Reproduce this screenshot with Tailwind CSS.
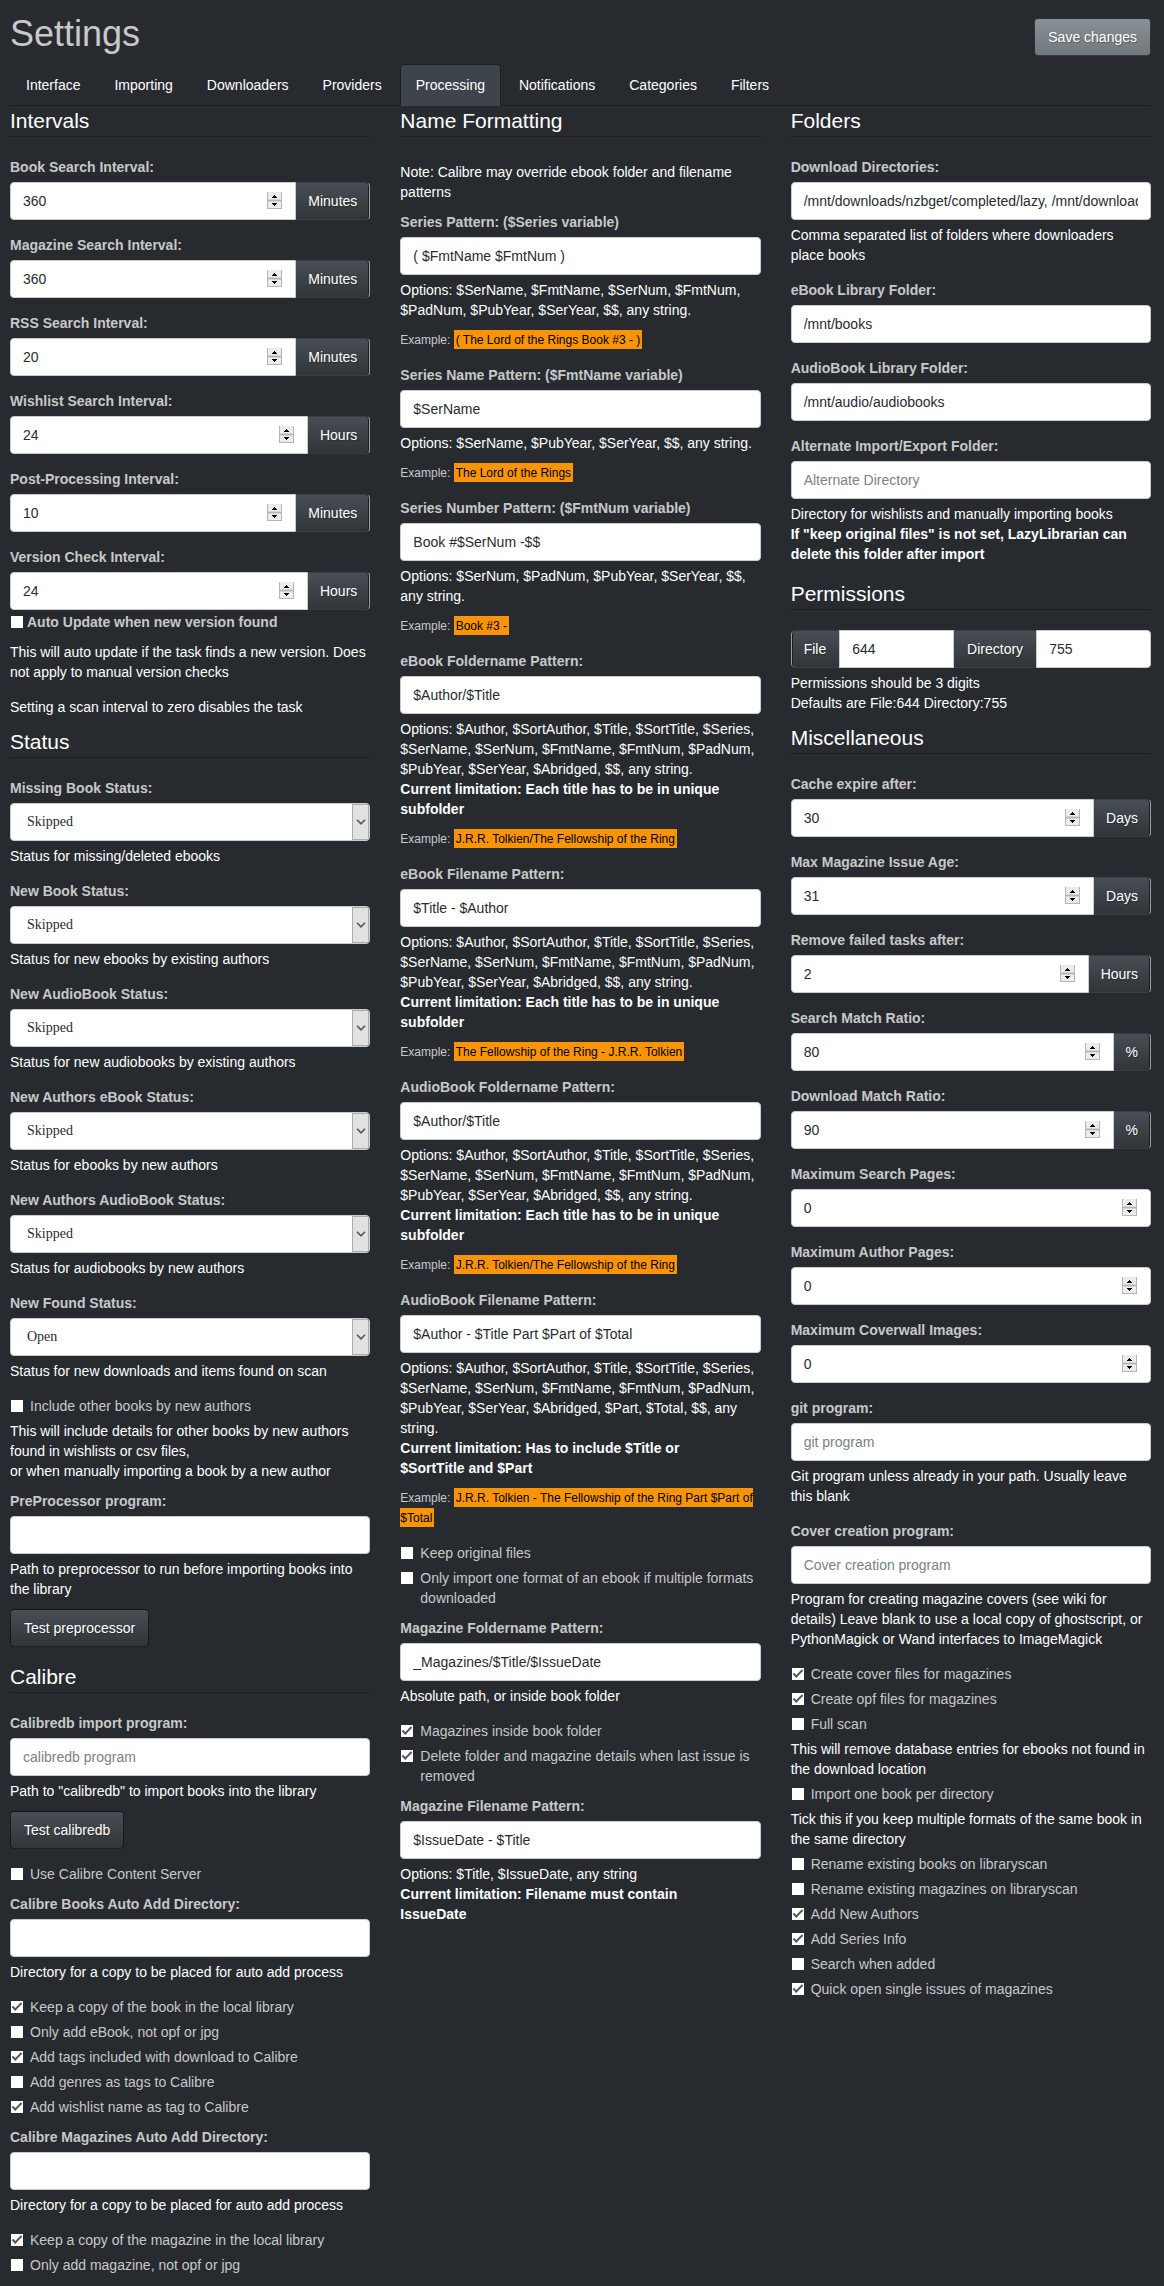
<!DOCTYPE html>
<html lang="en">
<head>
<meta charset="utf-8">
<meta name="viewport" content="width=device-width, initial-scale=1">
<title>Settings</title>
<script src="https://cdn.jsdelivr.net/npm/@tailwindcss/browser@4"></script>
</head>
<body class="bg-[#272b30] font-['Liberation_Sans',Arial,sans-serif] text-sm text-[#c8c8c8]">
<form class="pr-[13px] pl-[10px] pb-[11px]">
  <header class="flex items-start justify-between pt-[14px] pb-2">
    <h1 class="text-4xl leading-10">Settings</h1>
    <button type="button" class="mt-1 h-[38px] rounded border border-black/60 bg-linear-to-b from-[#8a9196] to-[#70787d] px-[13px] text-white text-shadow-[1px_1px_1px_rgb(0_0_0/0.3)]">Save changes</button>
  </header>

  <nav class="flex gap-[2px] border-b border-[#1c1e22] text-white [&>a]:-mb-px [&>a]:rounded-t [&>a]:border [&>a]:border-transparent [&>a]:px-[15px] [&>a]:py-[10px]">
    <a href="#interface">Interface</a>
    <a href="#importing">Importing</a>
    <a href="#downloaders">Downloaders</a>
    <a href="#providers">Providers</a>
    <a href="#processing" aria-current="page" class="aria-[current=page]:border-[#1c1e22]! aria-[current=page]:border-b-[#3e444c]! bg-[#3e444c]">Processing</a>
    <a href="#notifications">Notifications</a>
    <a href="#categories">Categories</a>
    <a href="#filters">Filters</a>
  </nav>

  <main class="grid grid-cols-3 gap-[30px]
    [&_h2]:mb-5 [&_h2]:border-b [&_h2]:border-[#1c1e22] [&_h2]:text-[21px] [&_h2]:leading-[30px] [&_h2]:text-white
    [&_.field]:mb-[15px] [&_.field>label]:mb-[5px] [&_.field>label]:block [&_.field>label]:font-bold
    [&_.help]:mt-[5px] [&_.help]:text-white
    [&_.example]:mt-[10px] [&_.example]:text-xs [&_.example]:leading-5
    [&_mark]:bg-[#f89406] [&_mark]:px-[2px] [&_mark]:pt-[3px] [&_mark]:pb-[2px] [&_mark]:text-black
    [&_.text]:h-[38px] [&_.text]:w-full [&_.text]:min-w-0 [&_.text]:rounded [&_.text]:border [&_.text]:border-[#ccc] [&_.text]:bg-white [&_.text]:px-3 [&_.text]:text-[#272b30] [&_.text]:placeholder:text-[#7a8288]
    [&_.text]:[appearance:textfield] [&_.text::-webkit-inner-spin-button]:appearance-none
    [&_.number]:relative [&_.number]:min-w-0 [&_.number]:flex-1
    [&_.spin]:pointer-events-none [&_.spin]:absolute [&_.spin]:top-[10px] [&_.spin]:right-[14px] [&_.spin]:h-[17px] [&_.spin]:w-[15px]
    [&_.group]:flex [&_.group_.text]:rounded-r-none
    [&_.unit]:flex [&_.unit]:items-center [&_.unit]:rounded-r [&_.unit]:border [&_.unit]:border-l-0 [&_.unit]:border-[#3a3e43] [&_.unit]:border-r-[#999c9f] [&_.unit]:bg-linear-to-b [&_.unit]:from-[#484e55] [&_.unit]:to-[#313539] [&_.unit]:px-3 [&_.unit]:text-white [&_.unit]:text-shadow-[1px_1px_1px_rgb(0_0_0/0.3)] [&_.unit]:shadow-[inset_-1px_0_#1c1e22]
    [&_.select]:relative [&_select]:block [&_select]:h-[38px] [&_select]:w-full [&_select]:appearance-none [&_select]:rounded [&_select]:border [&_select]:border-[#ccc] [&_select]:bg-white [&_select]:pl-4 [&_select]:font-['Liberation_Serif',serif] [&_select]:text-[#272b30]
    [&_.arrow]:pointer-events-none [&_.arrow]:absolute [&_.arrow]:inset-y-px [&_.arrow]:right-[1px] [&_.arrow]:flex [&_.arrow]:w-[17px] [&_.arrow]:items-center [&_.arrow]:justify-center [&_.arrow]:border [&_.arrow]:border-[#adadad] [&_.arrow]:bg-[#e1e1e1]
    [&_.checks]:mb-[10px] [&_.checks]:flex [&_.checks]:flex-col [&_.checks]:gap-[5px] [&_.checks_.help]:mt-0
    [&_.check]:flex [&_.check]:items-start [&_.check]:gap-[7px] [&_.check]:pl-px
    [&_[type=checkbox]]:mt-1 [&_[type=checkbox]]:grid [&_[type=checkbox]]:size-3 [&_[type=checkbox]]:shrink-0 [&_[type=checkbox]]:appearance-none [&_[type=checkbox]]:justify-center [&_[type=checkbox]]:bg-white [&_[type=checkbox]]:pt-[2px]
    [&_[type=checkbox]:checked]:before:h-[5px] [&_[type=checkbox]:checked]:before:w-[10px] [&_[type=checkbox]:checked]:before:-rotate-45 [&_[type=checkbox]:checked]:before:border-b-2 [&_[type=checkbox]:checked]:before:border-l-2 [&_[type=checkbox]:checked]:before:border-[#555] [&_[type=checkbox]:checked]:before:content-['']
    [&_.btn]:mt-[10px] [&_.btn]:mb-[15px] [&_.btn]:block [&_.btn]:h-[38px] [&_.btn]:rounded [&_.btn]:border [&_.btn]:border-black/60 [&_.btn]:bg-linear-to-b [&_.btn]:from-[#484e55] [&_.btn]:to-[#313539] [&_.btn]:px-[13px] [&_.btn]:text-white [&_.btn]:text-shadow-[1px_1px_1px_rgb(0_0_0/0.3)]">

    <svg class="hidden">
      <symbol id="spin" viewBox="0 0 15 17">
        <path fill="#ececec" d="M0 0h15v17H0z"/>
        <path fill="#b5b5b5" d="M0 0h1v17H0zM14 0h1v17h-1zM0 8h15v1H0zM0 16h15v1H0z"/>
        <path fill="#d4d4d4" d="M1 7h13v1H1zM1 9h13v1H1z"/>
        <path fill="#000" d="M7 3h1v1h1v1h1v1H5V5h1V4h1zM5 11h5v1H9v1H8v1H7v-1H6v-1H5z"/>
      </symbol>
      <symbol id="chevron" viewBox="0 0 10 6">
        <path fill="none" stroke="#555" stroke-width="1.6" d="M1 .8l4 4 4-4"/>
      </symbol>
    </svg>

    <div>
      <section>
        <h2>Intervals</h2>
        <div class="field"><label for="i1">Book Search Interval:</label>
          <div class="group"><div class="number"><input id="i1" class="text" type="number" value="360"><svg class="spin"><use href="#spin"/></svg></div><span class="unit">Minutes</span></div></div>
        <div class="field"><label for="i2">Magazine Search Interval:</label>
          <div class="group"><div class="number"><input id="i2" class="text" type="number" value="360"><svg class="spin"><use href="#spin"/></svg></div><span class="unit">Minutes</span></div></div>
        <div class="field"><label for="i3">RSS Search Interval:</label>
          <div class="group"><div class="number"><input id="i3" class="text" type="number" value="20"><svg class="spin"><use href="#spin"/></svg></div><span class="unit">Minutes</span></div></div>
        <div class="field"><label for="i4">Wishlist Search Interval:</label>
          <div class="group"><div class="number"><input id="i4" class="text" type="number" value="24"><svg class="spin"><use href="#spin"/></svg></div><span class="unit">Hours</span></div></div>
        <div class="field"><label for="i5">Post-Processing Interval:</label>
          <div class="group"><div class="number"><input id="i5" class="text" type="number" value="10"><svg class="spin"><use href="#spin"/></svg></div><span class="unit">Minutes</span></div></div>
        <div class="field"><label for="i6">Version Check Interval:</label>
          <div class="group"><div class="number"><input id="i6" class="text" type="number" value="24"><svg class="spin"><use href="#spin"/></svg></div><span class="unit">Hours</span></div>
          <div class="mt-[2px] mb-[10px] flex items-center gap-1 pl-px font-bold [&>input]:mt-0!"><input id="auto" type="checkbox"><label for="auto">Auto Update when new version found</label></div>
          <p class="text-white">This will auto update if the task finds a new version. Does not apply to manual version checks</p></div>
        <p class="mb-[10px] text-white">Setting a scan interval to zero disables the task</p>
      </section>

      <section>
        <h2>Status</h2>
        <div class="field"><label for="s1">Missing Book Status:</label>
          <div class="select"><select id="s1"><option>Skipped</option></select><span class="arrow"><svg class="h-[6px] w-[10px]"><use href="#chevron"/></svg></span></div>
          <p class="help">Status for missing/deleted ebooks</p></div>
        <div class="field"><label for="s2">New Book Status:</label>
          <div class="select"><select id="s2"><option>Skipped</option></select><span class="arrow"><svg class="h-[6px] w-[10px]"><use href="#chevron"/></svg></span></div>
          <p class="help">Status for new ebooks by existing authors</p></div>
        <div class="field"><label for="s3">New AudioBook Status:</label>
          <div class="select"><select id="s3"><option>Skipped</option></select><span class="arrow"><svg class="h-[6px] w-[10px]"><use href="#chevron"/></svg></span></div>
          <p class="help">Status for new audiobooks by existing authors</p></div>
        <div class="field"><label for="s4">New Authors eBook Status:</label>
          <div class="select"><select id="s4"><option>Skipped</option></select><span class="arrow"><svg class="h-[6px] w-[10px]"><use href="#chevron"/></svg></span></div>
          <p class="help">Status for ebooks by new authors</p></div>
        <div class="field"><label for="s5">New Authors AudioBook Status:</label>
          <div class="select"><select id="s5"><option>Skipped</option></select><span class="arrow"><svg class="h-[6px] w-[10px]"><use href="#chevron"/></svg></span></div>
          <p class="help">Status for audiobooks by new authors</p></div>
        <div class="field"><label for="s6">New Found Status:</label>
          <div class="select"><select id="s6"><option>Open</option></select><span class="arrow"><svg class="h-[6px] w-[10px]"><use href="#chevron"/></svg></span></div>
          <p class="help">Status for new downloads and items found on scan</p></div>
        <div class="checks">
          <label class="check"><input type="checkbox"><span>Include other books by new authors</span></label>
          <p class="help">This will include details for other books by new authors found in wishlists or csv files,<br>or when manually importing a book by a new author</p>
        </div>
        <div class="field"><label for="pre">PreProcessor program:</label>
          <input id="pre" class="text" type="text">
          <p class="help">Path to preprocessor to run before importing books into the library</p>
          <button type="button" class="btn">Test preprocessor</button></div>
      </section>

      <section>
        <h2>Calibre</h2>
        <div class="field"><label for="cdb">Calibredb import program:</label>
          <input id="cdb" class="text" type="text" placeholder="calibredb program">
          <p class="help">Path to "calibredb" to import books into the library</p>
          <button type="button" class="btn">Test calibredb</button></div>
        <div class="checks">
          <label class="check"><input type="checkbox"><span>Use Calibre Content Server</span></label>
        </div>
        <div class="field"><label for="cbd">Calibre Books Auto Add Directory:</label>
          <input id="cbd" class="text" type="text">
          <p class="help">Directory for a copy to be placed for auto add process</p></div>
        <div class="checks">
          <label class="check"><input type="checkbox" checked><span>Keep a copy of the book in the local library</span></label>
          <label class="check"><input type="checkbox"><span>Only add eBook, not opf or jpg</span></label>
          <label class="check"><input type="checkbox" checked><span>Add tags included with download to Calibre</span></label>
          <label class="check"><input type="checkbox"><span>Add genres as tags to Calibre</span></label>
          <label class="check"><input type="checkbox" checked><span>Add wishlist name as tag to Calibre</span></label>
        </div>
        <div class="field"><label for="cmd">Calibre Magazines Auto Add Directory:</label>
          <input id="cmd" class="text" type="text">
          <p class="help">Directory for a copy to be placed for auto add process</p></div>
        <div class="flex flex-col gap-[5px]">
          <label class="check"><input type="checkbox" checked><span>Keep a copy of the magazine in the local library</span></label>
          <label class="check"><input type="checkbox"><span>Only add magazine, not opf or jpg</span></label>
        </div>
      </section>
    </div>

    <section>
      <h2>Name Formatting</h2>
      <p class="mb-[10px] pt-[5px] text-white">Note: Calibre may override ebook folder and filename patterns</p>
      <div class="field"><label for="n1">Series Pattern: ($Series variable)</label>
        <input id="n1" class="text" type="text" value="( $FmtName $FmtNum )">
        <p class="help">Options: $SerName, $FmtName, $SerNum, $FmtNum, $PadNum, $PubYear, $SerYear, $$, any string.</p>
        <p class="example">Example: <mark>( The Lord of the Rings Book #3 - )</mark></p></div>
      <div class="field"><label for="n2">Series Name Pattern: ($FmtName variable)</label>
        <input id="n2" class="text" type="text" value="$SerName">
        <p class="help">Options: $SerName, $PubYear, $SerYear, $$, any string.</p>
        <p class="example">Example: <mark>The Lord of the Rings</mark></p></div>
      <div class="field"><label for="n3">Series Number Pattern: ($FmtNum variable)</label>
        <input id="n3" class="text" type="text" value="Book #$SerNum -$$">
        <p class="help">Options: $SerNum, $PadNum, $PubYear, $SerYear, $$, any string.</p>
        <p class="example">Example: <mark>Book #3 -</mark></p></div>
      <div class="field"><label for="n4">eBook Foldername Pattern:</label>
        <input id="n4" class="text" type="text" value="$Author/$Title">
        <p class="help">Options: $Author, $SortAuthor, $Title, $SortTitle, $Series, $SerName, $SerNum, $FmtName, $FmtNum, $PadNum, $PubYear, $SerYear, $Abridged, $$, any string.<br><b>Current limitation: Each title has to be in unique subfolder</b></p>
        <p class="example">Example: <mark>J.R.R. Tolkien/The Fellowship of the Ring</mark></p></div>
      <div class="field"><label for="n5">eBook Filename Pattern:</label>
        <input id="n5" class="text" type="text" value="$Title - $Author">
        <p class="help">Options: $Author, $SortAuthor, $Title, $SortTitle, $Series, $SerName, $SerNum, $FmtName, $FmtNum, $PadNum, $PubYear, $SerYear, $Abridged, $$, any string.<br><b>Current limitation: Each title has to be in unique subfolder</b></p>
        <p class="example">Example: <mark>The Fellowship of the Ring - J.R.R. Tolkien</mark></p></div>
      <div class="field"><label for="n6">AudioBook Foldername Pattern:</label>
        <input id="n6" class="text" type="text" value="$Author/$Title">
        <p class="help">Options: $Author, $SortAuthor, $Title, $SortTitle, $Series, $SerName, $SerNum, $FmtName, $FmtNum, $PadNum, $PubYear, $SerYear, $Abridged, $$, any string.<br><b>Current limitation: Each title has to be in unique subfolder</b></p>
        <p class="example">Example: <mark>J.R.R. Tolkien/The Fellowship of the Ring</mark></p></div>
      <div class="field"><label for="n7">AudioBook Filename Pattern:</label>
        <input id="n7" class="text" type="text" value="$Author - $Title Part $Part of $Total">
        <p class="help">Options: $Author, $SortAuthor, $Title, $SortTitle, $Series, $SerName, $SerNum, $FmtName, $FmtNum, $PadNum, $PubYear, $SerYear, $Abridged, $Part, $Total, $$, any string.<br><b>Current limitation: Has to include $Title or<br>$SortTitle and $Part</b></p>
        <p class="example">Example: <mark>J.R.R. Tolkien - The Fellowship of the Ring Part $Part of $Total</mark></p></div>
      <div class="checks">
        <label class="check"><input type="checkbox"><span>Keep original files</span></label>
        <label class="check"><input type="checkbox"><span>Only import one format of an ebook if multiple formats downloaded</span></label>
      </div>
      <div class="field"><label for="n8">Magazine Foldername Pattern:</label>
        <input id="n8" class="text" type="text" value="_Magazines/$Title/$IssueDate">
        <p class="help">Absolute path, or inside book folder</p></div>
      <div class="checks">
        <label class="check"><input type="checkbox" checked><span>Magazines inside book folder</span></label>
        <label class="check"><input type="checkbox" checked><span>Delete folder and magazine details when last issue is removed</span></label>
      </div>
      <div class="field"><label for="n9">Magazine Filename Pattern:</label>
        <input id="n9" class="text" type="text" value="$IssueDate - $Title">
        <p class="help">Options: $Title, $IssueDate, any string<br><b>Current limitation: Filename must contain<br>IssueDate</b></p></div>
    </section>

    <div>
      <section>
        <h2>Folders</h2>
        <div class="field"><label for="f1">Download Directories:</label>
          <input id="f1" class="text" type="text" value="/mnt/downloads/nzbget/completed/lazy, /mnt/downloads">
          <p class="help">Comma separated list of folders where downloaders<br>place books</p></div>
        <div class="field"><label for="f2">eBook Library Folder:</label>
          <input id="f2" class="text" type="text" value="/mnt/books"></div>
        <div class="field"><label for="f3">AudioBook Library Folder:</label>
          <input id="f3" class="text" type="text" value="/mnt/audio/audiobooks"></div>
        <div class="field"><label for="f4">Alternate Import/Export Folder:</label>
          <input id="f4" class="text" type="text" placeholder="Alternate Directory">
          <p class="help">Directory for wishlists and manually importing books<br><b>If "keep original files" is not set, LazyLibrarian can delete this folder after import</b></p></div>
      </section>

      <section class="mb-[10px]">
        <h2>Permissions</h2>
        <div class="flex [&_.text]:w-0 [&_.text]:flex-1 [&>label]:flex [&>label]:items-center [&>label]:border-y [&>label]:border-[#3a3e43] [&>label]:bg-linear-to-b [&>label]:from-[#484e55] [&>label]:to-[#313539] [&>label]:px-[13px] [&>label]:text-white [&>label]:text-shadow-[1px_1px_1px_rgb(0_0_0/0.3)]">
          <label for="p1" class="rounded-l shadow-[inset_1px_0_#999c9f,inset_2px_0_#1c1e22]">File</label>
          <input id="p1" class="text rounded-none!" type="text" value="644">
          <label for="p2">Directory</label>
          <input id="p2" class="text rounded-l-none!" type="text" value="755">
        </div>
        <p class="help">Permissions should be 3 digits<br>Defaults are File:644 Directory:755</p>
      </section>

      <section>
        <h2>Miscellaneous</h2>
        <div class="field"><label for="m1">Cache expire after:</label>
          <div class="group"><div class="number"><input id="m1" class="text" type="number" value="30"><svg class="spin"><use href="#spin"/></svg></div><span class="unit">Days</span></div></div>
        <div class="field"><label for="m2">Max Magazine Issue Age:</label>
          <div class="group"><div class="number"><input id="m2" class="text" type="number" value="31"><svg class="spin"><use href="#spin"/></svg></div><span class="unit">Days</span></div></div>
        <div class="field"><label for="m3">Remove failed tasks after:</label>
          <div class="group"><div class="number"><input id="m3" class="text" type="number" value="2"><svg class="spin"><use href="#spin"/></svg></div><span class="unit">Hours</span></div></div>
        <div class="field"><label for="m4">Search Match Ratio:</label>
          <div class="group"><div class="number"><input id="m4" class="text" type="number" value="80"><svg class="spin"><use href="#spin"/></svg></div><span class="unit">%</span></div></div>
        <div class="field"><label for="m5">Download Match Ratio:</label>
          <div class="group"><div class="number"><input id="m5" class="text" type="number" value="90"><svg class="spin"><use href="#spin"/></svg></div><span class="unit">%</span></div></div>
        <div class="field"><label for="m6">Maximum Search Pages:</label>
          <div class="number"><input id="m6" class="text" type="number" value="0"><svg class="spin"><use href="#spin"/></svg></div></div>
        <div class="field"><label for="m7">Maximum Author Pages:</label>
          <div class="number"><input id="m7" class="text" type="number" value="0"><svg class="spin"><use href="#spin"/></svg></div></div>
        <div class="field"><label for="m8">Maximum Coverwall Images:</label>
          <div class="number"><input id="m8" class="text" type="number" value="0"><svg class="spin"><use href="#spin"/></svg></div></div>
        <div class="field"><label for="m9">git program:</label>
          <input id="m9" class="text" type="text" placeholder="git program">
          <p class="help">Git program unless already in your path. Usually leave this blank</p></div>
        <div class="field"><label for="m10">Cover creation program:</label>
          <input id="m10" class="text" type="text" placeholder="Cover creation program">
          <p class="help">Program for creating magazine covers (see wiki for details) Leave blank to use a local copy of ghostscript, or PythonMagick or Wand interfaces to ImageMagick</p></div>
        <div class="checks">
          <label class="check"><input type="checkbox" checked><span>Create cover files for magazines</span></label>
          <label class="check"><input type="checkbox" checked><span>Create opf files for magazines</span></label>
          <label class="check"><input type="checkbox"><span>Full scan</span></label>
          <p class="help">This will remove database entries for ebooks not found in the download location</p>
          <label class="check"><input type="checkbox"><span>Import one book per directory</span></label>
          <p class="help">Tick this if you keep multiple formats of the same book in the same directory</p>
          <label class="check"><input type="checkbox"><span>Rename existing books on libraryscan</span></label>
          <label class="check"><input type="checkbox"><span>Rename existing magazines on libraryscan</span></label>
          <label class="check"><input type="checkbox" checked><span>Add New Authors</span></label>
          <label class="check"><input type="checkbox" checked><span>Add Series Info</span></label>
          <label class="check"><input type="checkbox"><span>Search when added</span></label>
          <label class="check"><input type="checkbox" checked><span>Quick open single issues of magazines</span></label>
        </div>
      </section>
    </div>
  </main>
</form>
</body>
</html>
